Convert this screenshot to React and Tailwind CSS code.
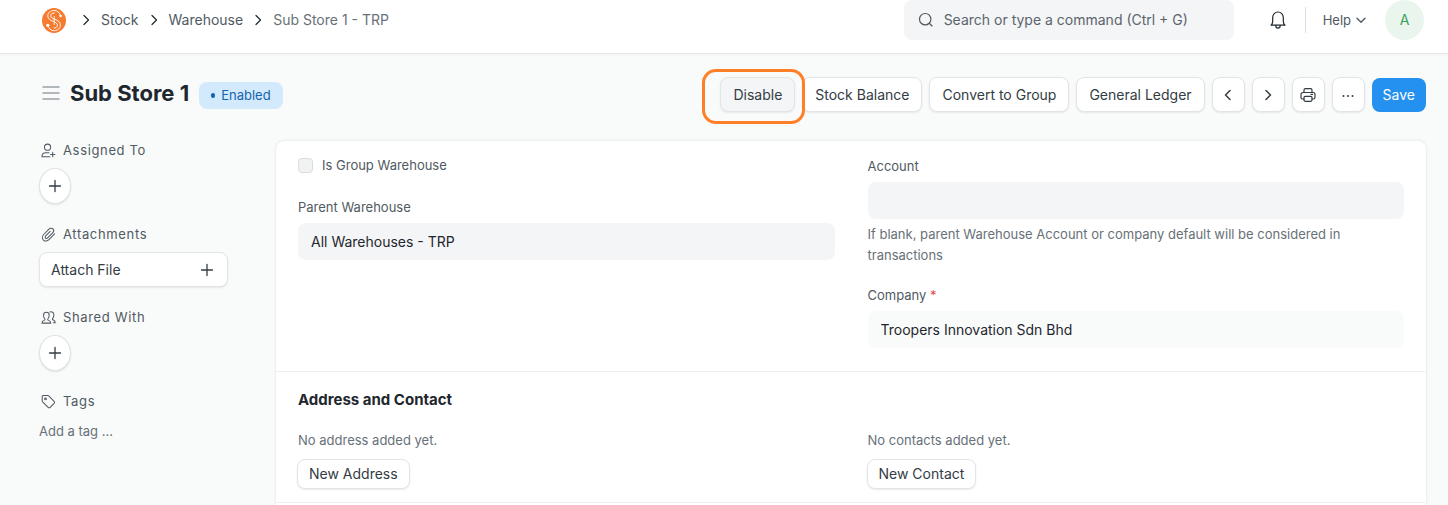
import React from "react";

function Icon({ className = "size-4", width = 1.2, children, box = "0 0 16 16" }) {
  return (
    <svg
      aria-hidden="true"
      viewBox={box}
      className={`shrink-0 ${className}`}
      fill="none"
      stroke="currentColor"
      strokeWidth={width}
      strokeLinecap="round"
      strokeLinejoin="round"
    >
      {children}
    </svg>
  );
}

const Chevron = ({ d, className, width = 1.5 }) => (
  <Icon className={className} width={width}>
    <path d={d} />
  </Icon>
);
const RIGHT = "M6 3.5 10.5 8 6 12.5";
const LEFT = "M10 3.5 5.5 8 10 12.5";

function Plus() {
  return (
    <Icon className="size-4" width={1.3}>
      <path d="M8 2.5v11M2.5 8h11" />
    </Icon>
  );
}

function Logo() {
  return (
    <svg viewBox="0 0 24 25" className="h-[25px] w-6 shrink-0" fill="none" aria-hidden="true">
      <ellipse cx="12" cy="12.5" rx="12" ry="12.5" fill="#f47b30" />
      <g stroke="#fff" strokeWidth="0.9" strokeLinecap="round">
        <path d="M18.600 8C17.900 4.500 15.300 2.500 12 2.500 8.500 2.500 5.800 4.700 5.800 7.900c0 3 2.400 4.300 5.700 5.600 2.500 1 3.900 1.900 3.900 3.800 0 1.700-1.400 2.800-3.300 2.800" />
        <path d="M12.200 16.500V8.500" />
        <path d="M12.200 5C10.100 5 8.700 6.100 8.700 7.700c0 1.900 1.500 2.600 3.800 3.500 3.400 1.200 5.900 2.600 5.900 5.900 0 3.200-2.700 5.600-6.300 5.600-3.100 0-5.600-1.900-6.300-5.400" />
      </g>
      <circle cx="18.600" cy="8" r="1.200" fill="#fff" />
      <circle cx="5.800" cy="17.300" r="1.600" fill="#fff" />
    </svg>
  );
}

const outline =
  "flex h-[35px] items-center justify-center rounded-lg border border-[#e2e5e7] bg-white text-[#333c44] shadow-[0_1px_2px_rgba(0,0,0,0.08)]";

function Button({ children, className = "px-3", ...props }) {
  return (
    <button type="button" className={`${outline} whitespace-nowrap ${className}`} {...props}>
      {children}
    </button>
  );
}

function SideSection({ icon, title, children }) {
  return (
    <section className="flex flex-col items-start gap-2">
      <h2 className="flex h-5 items-center gap-[7px] text-[13px] tracking-wider text-[#505a62]">
        {icon}
        {title}
      </h2>
      {children}
    </section>
  );
}

function RoundAdd({ label }) {
  return (
    <button
      type="button"
      aria-label={label}
      className="flex h-9 w-8 items-center justify-center rounded-[50%] border border-[#dfe2e4] bg-white text-[#333c44] shadow-[0_1px_2px_rgba(0,0,0,0.1)]"
    >
      <Plus />
    </button>
  );
}

function Field({ id, label, value, required, className = "bg-[#f4f5f6]", readOnly }) {
  return (
    <div className="flex flex-col gap-[7px]">
      <label htmlFor={id} className="text-[13px] leading-[18px] text-[#505a62]">
        {label}
        {required && <span className="text-[#e24c4c]"> *</span>}
      </label>
      <input
        id={id}
        type="text"
        defaultValue={value}
        readOnly={readOnly}
        className={`h-[37px] w-full rounded-lg px-[13px] text-[#1f272e] outline-none ${className}`}
      />
    </div>
  );
}

function Navbar() {
  return (
    <header className="flex items-start justify-between border-b border-[#e6e9e9] bg-white pb-[13px] pl-[42px] pr-6 shadow-[0_1px_2px_rgba(0,0,0,0.04)]">
      <nav aria-label="Breadcrumb" className="flex h-10 items-center text-[#505a62]">
        <a href="#home" aria-label="Home">
          <Logo />
        </a>
        <Chevron d={RIGHT} className="ml-3 mr-[7px] size-4 text-[#1f272e]" width={1.2} />
        <a href="#stock">Stock</a>
        <Chevron d={RIGHT} className="mx-[7px] size-4 text-[#1f272e]" width={1.2} />
        <a href="#warehouse">Warehouse</a>
        <Chevron d={RIGHT} className="mx-[7px] size-4 text-[#1f272e]" width={1.2} />
        <a href="#sub-store" className="text-[#687178]">
          Sub Store 1 - TRP
        </a>
      </nav>
      <div className="flex h-10 items-center">
        <label className="flex h-10 w-[330px] items-center gap-2.5 rounded-lg bg-[#f4f5f6] px-3.5 text-[#505a62]">
          <Icon className="size-4" width={1.2}>
            <circle cx="7.200" cy="7.200" r="5.700" />
            <path d="m11.500 11.500 2.500 2.500" />
          </Icon>
          <input
            type="text"
            aria-label="Search"
            placeholder="Search or type a command (Ctrl + G)"
            className="min-w-0 flex-1 bg-transparent outline-none placeholder:text-[#5b646c]"
          />
        </label>
        <button type="button" aria-label="Notifications" className="ml-[35px] text-[#1f272e]">
          <Icon className="h-5 w-[18px]" box="0 0 18 20" width={1.2}>
            <path d="M2 15.200h14c-1.200-1-1.700-2.200-1.700-3.600V7.400C14.300 4.400 12 2 9 2S3.700 4.400 3.700 7.400v4.200c0 1.400-.5 2.600-1.700 3.600Z" />
            <path d="M6.800 15.500c0 1.700 1 2.700 2.200 2.700s2.200-1 2.200-2.700" />
          </Icon>
        </button>
        <span className="ml-[18px] h-[26px] w-px bg-[#dcdfe1]" />
        <button type="button" className="ml-[17px] flex items-center gap-1 text-[13px] text-[#505a62]">
          Help
          <Icon className="size-3" box="0 0 12 12" width={1.4}>
            <path d="m2 4.300 4 3.900 4-3.900" />
          </Icon>
        </button>
        <button
          type="button"
          aria-label="Account menu"
          className="ml-[18px] flex h-10 w-[39px] items-center justify-center rounded-[50%] bg-[#eaf5ee] text-sm text-[#38a160]"
        >
          A
        </button>
      </div>
    </header>
  );
}

function PageHead() {
  return (
    <div className="flex items-start justify-between pl-[42px] pr-[22px] pt-[23px]">
      <div className="flex items-end">
        <div className="flex items-center">
          <button type="button" aria-label="Toggle sidebar" className="text-[#98a1a9]">
            <Icon className="h-4 w-[18px]" box="0 0 18 16" width={1.5}>
              <path d="M1 2h16M1 8h16M1 14h16" />
            </Icon>
          </button>
          <h1 className="ml-2.5 text-[22px] font-bold leading-8 text-[#1f272e]">Sub Store 1</h1>
        </div>
        <span className="ml-2.5 flex h-[27px] items-center gap-1.5 rounded-lg bg-[#d3e9fc] px-3 text-[13px] text-[#1366ae]">
          <span className="h-[5px] w-1 rounded-full bg-[#1366ae]" />
          Enabled
        </span>
      </div>
      <div className="flex items-center gap-[7px]">
        <div className="relative">
          <button type="button" className={`${outline} bg-[#f4f5f6]! px-3`}>
            Disable
          </button>
          <span className="pointer-events-none absolute -bottom-3 -left-[18px] -right-2.5 -top-2 z-10 rounded-[14px] border-3 border-[#ff7f27]" />
        </div>
        <Button>Stock Balance</Button>
        <Button>Convert to Group</Button>
        <Button>General Ledger</Button>
        <Button className="w-[33px]" aria-label="Previous">
          <Chevron d={LEFT} className="size-4" />
        </Button>
        <Button className="w-[33px]" aria-label="Next">
          <Chevron d={RIGHT} className="size-4" />
        </Button>
        <Button className="w-[33px]" aria-label="Print">
          <Icon className="size-4" width={1.2}>
            <path d="M4 5.500V3.200C4 2.300 4.500 1.700 5.400 1.700h5.200c.9 0 1.400.6 1.400 1.500v2.300" />
            <path d="M4 12H2.800C1.800 12 1 11.200 1 10.200V7.500c0-1.100.8-2 1.800-2h10.400c1 0 1.800.9 1.800 2v2.700c0 1-.8 1.800-1.800 1.800H12" />
            <rect x="4" y="9.300" width="8" height="5" rx="1.200" />
            <path d="M11 7.400h1.500" />
          </Icon>
        </Button>
        <Button className="w-[33px]" aria-label="More actions">
          <svg viewBox="0 0 16 16" className="size-4" fill="currentColor" aria-hidden="true">
            <circle cx="3.500" cy="9" r="1" />
            <circle cx="8" cy="9" r="1" />
            <circle cx="12.500" cy="9" r="1" />
          </svg>
        </Button>
        <button type="button" className="h-[34px] rounded-lg bg-[#2490ef] px-[11px] text-white">
          Save
        </button>
      </div>
    </div>
  );
}

function Sidebar() {
  return (
    <aside className="flex w-[189px] shrink-0 flex-col gap-5">
      <SideSection
        title="Assigned To"
        icon={
          <Icon className="ml-0.5 size-[15px]" width={1.1}>
            <circle cx="7" cy="4.500" r="3.300" />
            <path d="M8.500 10.500H5c-2.200 0-3.900 1.300-4 4.200h8.500" />
            <path d="M12.500 10v4.600M10.200 12.300h4.600" />
          </Icon>
        }
      >
        <RoundAdd label="Add assignee" />
      </SideSection>
      <SideSection
        title="Attachments"
        icon={
          <Icon className="ml-0.5 size-[15px]" width={1.1}>
            <path d="m14.500 7.300-6 6.200c-1.800 1.800-4.300 2-5.900.4s-1.500-4.100.3-5.900l5.600-5.700c1.300-1.300 3.100-1.400 4.200-.3s1 2.900-.3 4.200l-5.300 5.400c-.7.700-1.700.8-2.300.2s-.5-1.600.2-2.300l4.800-4.900" />
          </Icon>
        }
      >
        <button type="button" className={`${outline} w-full justify-between! px-[11px]`}>
          Attach File
          <span className="mr-px">
            <Plus />
          </span>
        </button>
      </SideSection>
      <SideSection
        title="Shared With"
        icon={
          <Icon className="ml-0.5 size-[15px]" width={1.1}>
            <path d="M1 14c0-2 .8-2.600 2.700-3.200.8-.3.7-1-.1-2C2.800 7.800 2.600 6.700 2.700 5.200 2.800 3.500 4 2.400 5.700 2.400s2.900 1.100 3 2.800c.1 1.500-.1 2.600-.9 3.600-.8 1-.9 1.700-.1 2 1.900.6 2.700 1.200 2.700 3.200Z" />
            <path d="M9.500 2.200c2.300-.8 4.200.5 4.200 2.900 0 1.500-.2 2.500-1 3.500-.7.900-.7 1.500.1 1.800 1.700.5 2.400 1.200 2.400 3.200h-2" />
          </Icon>
        }
      >
        <RoundAdd label="Share document" />
      </SideSection>
      <SideSection
        title="Tags"
        icon={
          <Icon className="ml-0.5 size-[15px]" width={1.1}>
            <path d="M1.300 2.600v4.600c0 .4.100.8.400 1.100l5.900 6c.6.600 1.600.6 2.200 0l4.200-4.300c.6-.6.6-1.500 0-2.100L8.200 2.100c-.3-.3-.7-.5-1.100-.5H2.300c-.6 0-1 .4-1 1Z" />
            <circle cx="4.800" cy="5.200" r=".9" />
          </Icon>
        }
      >
        <button type="button" className="text-[13px] leading-6 text-[#687178]">
          Add a tag ...
        </button>
      </SideSection>
    </aside>
  );
}

const grid = "grid grid-cols-2 gap-x-[33px] px-[22px]";

function EmptyList({ text, action }) {
  return (
    <div className="flex flex-col items-start gap-2.5">
      <p className="text-[13px] leading-[18px] text-[#687178]">{text}</p>
      <button type="button" className={`${outline} -ml-px h-[30px]! px-[11px]`}>
        {action}
      </button>
    </div>
  );
}

export default function App() {
  return (
    <div className="min-h-screen overflow-x-hidden bg-[#f9fafa] font-['Inter','Noto_Sans',sans-serif] text-sm">
      <Navbar />
      <PageHead />
      <div className="flex gap-12 pl-[39px] pr-[22px] pt-7">
        <Sidebar />
        <main className="mt-px min-w-0 flex-1 rounded-t-lg bg-white shadow-[0_0_3px_rgba(0,0,0,0.12)]">
          <section className={`${grid} pb-[23px] pt-4`}>
            <div className="flex flex-col gap-[25px]">
              <label className="flex h-4 items-center gap-[9px] text-[13px] text-[#505a62]">
                <input
                  type="checkbox"
                  className="size-[15px] appearance-none rounded border border-[#d9dddc] bg-[#f1f3f2]"
                />
                Is Group Warehouse
              </label>
              <Field id="parent" label="Parent Warehouse" value="All Warehouses - TRP" />
            </div>
            <div>
              <Field id="account" label="Account" value="" />
              <p className="mb-5 mt-[5px] text-[13px] leading-[21px] text-[#687178]">
                If blank, parent Warehouse Account or company default will be considered in transactions
              </p>
              <Field
                id="company"
                label="Company"
                value="Troopers Innovation Sdn Bhd"
                required
                readOnly
                className="bg-[#f9fafa]"
              />
            </div>
          </section>
          <section className="border-t border-[#edf0f0] pb-[13px] pt-[18px]">
            <h2 className="px-[22px] text-[15px] font-bold leading-5 text-[#1f272e]">
              Address and Contact
            </h2>
            <div className={`${grid} mt-[21px]`}>
              <EmptyList text="No address added yet." action="New Address" />
              <EmptyList text="No contacts added yet." action="New Contact" />
            </div>
          </section>
          <div className="border-t border-[#edf0f0] pb-0.5" />
        </main>
      </div>
    </div>
  );
}
